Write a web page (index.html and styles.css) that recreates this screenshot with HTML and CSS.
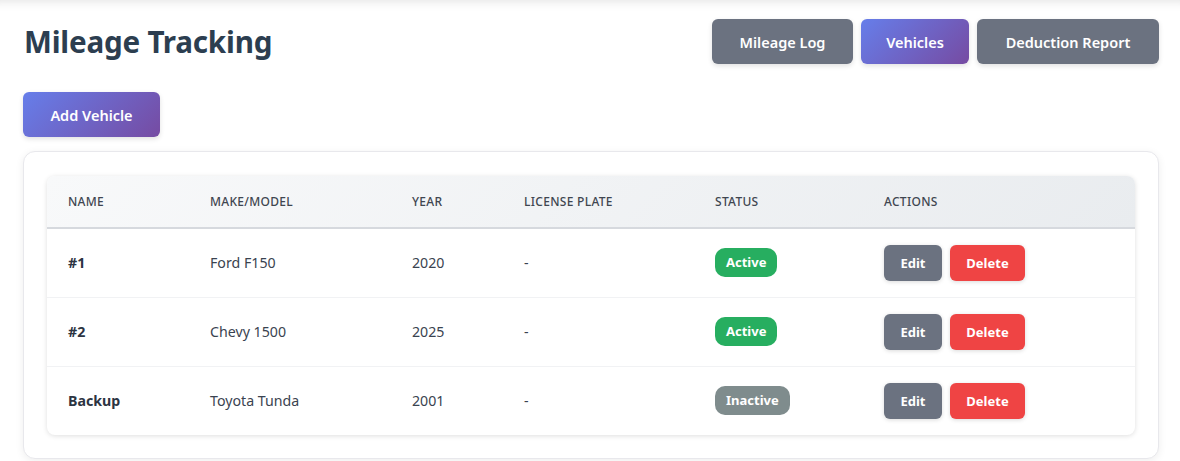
FILE: index.html
```html
<!DOCTYPE html>
<html lang="en">
<head>
<meta charset="utf-8">
<title>Mileage Tracking</title>
<link rel="stylesheet" href="styles.css">
</head>
<body>
<div class="page">
  <header class="topbar">
    <h1 class="title">Mileage Tracking</h1>
    <nav class="nav">
      <button class="btn btn-gray btn-log">Mileage Log</button>
      <button class="btn btn-primary btn-veh">Vehicles</button>
      <button class="btn btn-gray btn-rep">Deduction Report</button>
    </nav>
  </header>
  <div class="toolbar">
    <button class="btn btn-primary btn-add">Add Vehicle</button>
  </div>
  <section class="card">
    <div class="table-wrap">
      <table class="table">
        <thead>
          <tr>
            <th class="c-name">Name</th>
            <th class="c-model">Make/Model</th>
            <th class="c-year">Year</th>
            <th class="c-plate">License Plate</th>
            <th class="c-status">Status</th>
            <th class="c-actions">Actions</th>
          </tr>
        </thead>
        <tbody>
          <tr>
            <td class="name">#1</td>
            <td>Ford F150</td>
            <td>2020</td>
            <td>-</td>
            <td><span class="badge badge-active">Active</span></td>
            <td><div class="actions"><button class="sbtn sbtn-edit">Edit</button><button class="sbtn sbtn-del">Delete</button></div></td>
          </tr>
          <tr>
            <td class="name">#2</td>
            <td>Chevy 1500</td>
            <td>2025</td>
            <td>-</td>
            <td><span class="badge badge-active">Active</span></td>
            <td><div class="actions"><button class="sbtn sbtn-edit">Edit</button><button class="sbtn sbtn-del">Delete</button></div></td>
          </tr>
          <tr>
            <td class="name">Backup</td>
            <td>Toyota Tunda</td>
            <td>2001</td>
            <td>-</td>
            <td><span class="badge badge-inactive">Inactive</span></td>
            <td><div class="actions"><button class="sbtn sbtn-edit">Edit</button><button class="sbtn sbtn-del">Delete</button></div></td>
          </tr>
        </tbody>
      </table>
    </div>
  </section>
</div>
</body>
</html>
```

FILE: styles.css
```css
* { box-sizing: border-box; }
html, body { margin: 0; padding: 0; background: #ffffff; }
body {
  font-family: "Noto Sans", "Open Sans", sans-serif;
  color: #2c3e50;
  overflow: hidden;
}
.page {
  height: 461px;
  padding: 19px 21px 0 23px;
  box-shadow: inset 0 12px 12px -12px rgba(0, 0, 0, 0.14);
}
.topbar {
  display: flex;
  justify-content: space-between;
  align-items: flex-start;
}
.title {
  margin: 5px 0 0 1px;
  font-size: 29.6px;
  font-weight: 700;
  color: #2c3e50;
  line-height: 36px;
  letter-spacing: -0.2px;
}
.nav { display: flex; gap: 8px; }
.btn {
  border: none;
  height: 45px;
  padding: 0;
  border-radius: 6px;
  color: #ffffff;
  font-family: inherit;
  font-size: 14.5px;
  font-weight: 600;
  box-shadow: 0 2px 5px rgba(0, 0, 0, 0.12);
  cursor: pointer;
}
.btn-log { width: 141px; }
.btn-veh { width: 108px; }
.btn-rep { width: 182px; }
.btn-gray { background: #6b7280; }
.btn-primary { background: linear-gradient(135deg, #667eea 0%, #764ba2 100%); }
.toolbar { margin-top: 28px; }
.btn-add { width: 137px; }
.card {
  margin-top: 14px;
  width: 1136px;
  background: #ffffff;
  border: 1px solid #e8e8ec;
  border-radius: 12px;
  padding: 24px 23px 23px 23px;
  box-shadow: 0 2px 8px rgba(0, 0, 0, 0.07);
}
.table-wrap {
  border-radius: 8px;
  box-shadow: 0 1px 5px rgba(0, 0, 0, 0.13);
  overflow: hidden;
}
.table {
  width: 100%;
  border-collapse: collapse;
  table-layout: fixed;
}
.table thead tr {
  background: linear-gradient(135deg, #f8f9fa 0%, #e9ecef 100%);
}
.table th {
  height: 52px;
  padding: 0 21px;
  text-align: left;
  font-size: 12px;
  font-weight: 500;
  text-transform: uppercase;
  letter-spacing: 0.3px;
  color: #3f4650;
  border-bottom: 2px solid #d6d9de;
}
.c-name { width: 142px; }
.c-model { width: 202px; }
.c-year { width: 112px; }
.c-plate { width: 191px; }
.c-status { width: 169px; }
.table td {
  height: 69px;
  padding: 0 21px;
  font-size: 14.2px;
  color: #3a4350;
  border-bottom: 1px solid #f1f2f4;
}
.table tbody tr:last-child td { border-bottom: none; }
.table td.name { font-weight: 700; color: #2c3442; }
.badge {
  display: inline-block;
  height: 29px;
  line-height: 29px;
  padding: 0 11px;
  border-radius: 10px;
  color: #ffffff;
  font-size: 13px;
  font-weight: 700;
}
.badge-active { background: #27ae60; }
.badge-inactive { background: #7f8c8d; }
.actions { display: flex; gap: 8px; }
.sbtn {
  border: none;
  height: 36px;
  padding: 0;
  border-radius: 6px;
  color: #ffffff;
  font-family: inherit;
  font-size: 13px;
  font-weight: 700;
  box-shadow: 0 1px 4px rgba(0, 0, 0, 0.15);
}
.sbtn-edit { background: #6b7280; width: 58px; }
.sbtn-del { background: #ef4444; width: 75px; }
```
